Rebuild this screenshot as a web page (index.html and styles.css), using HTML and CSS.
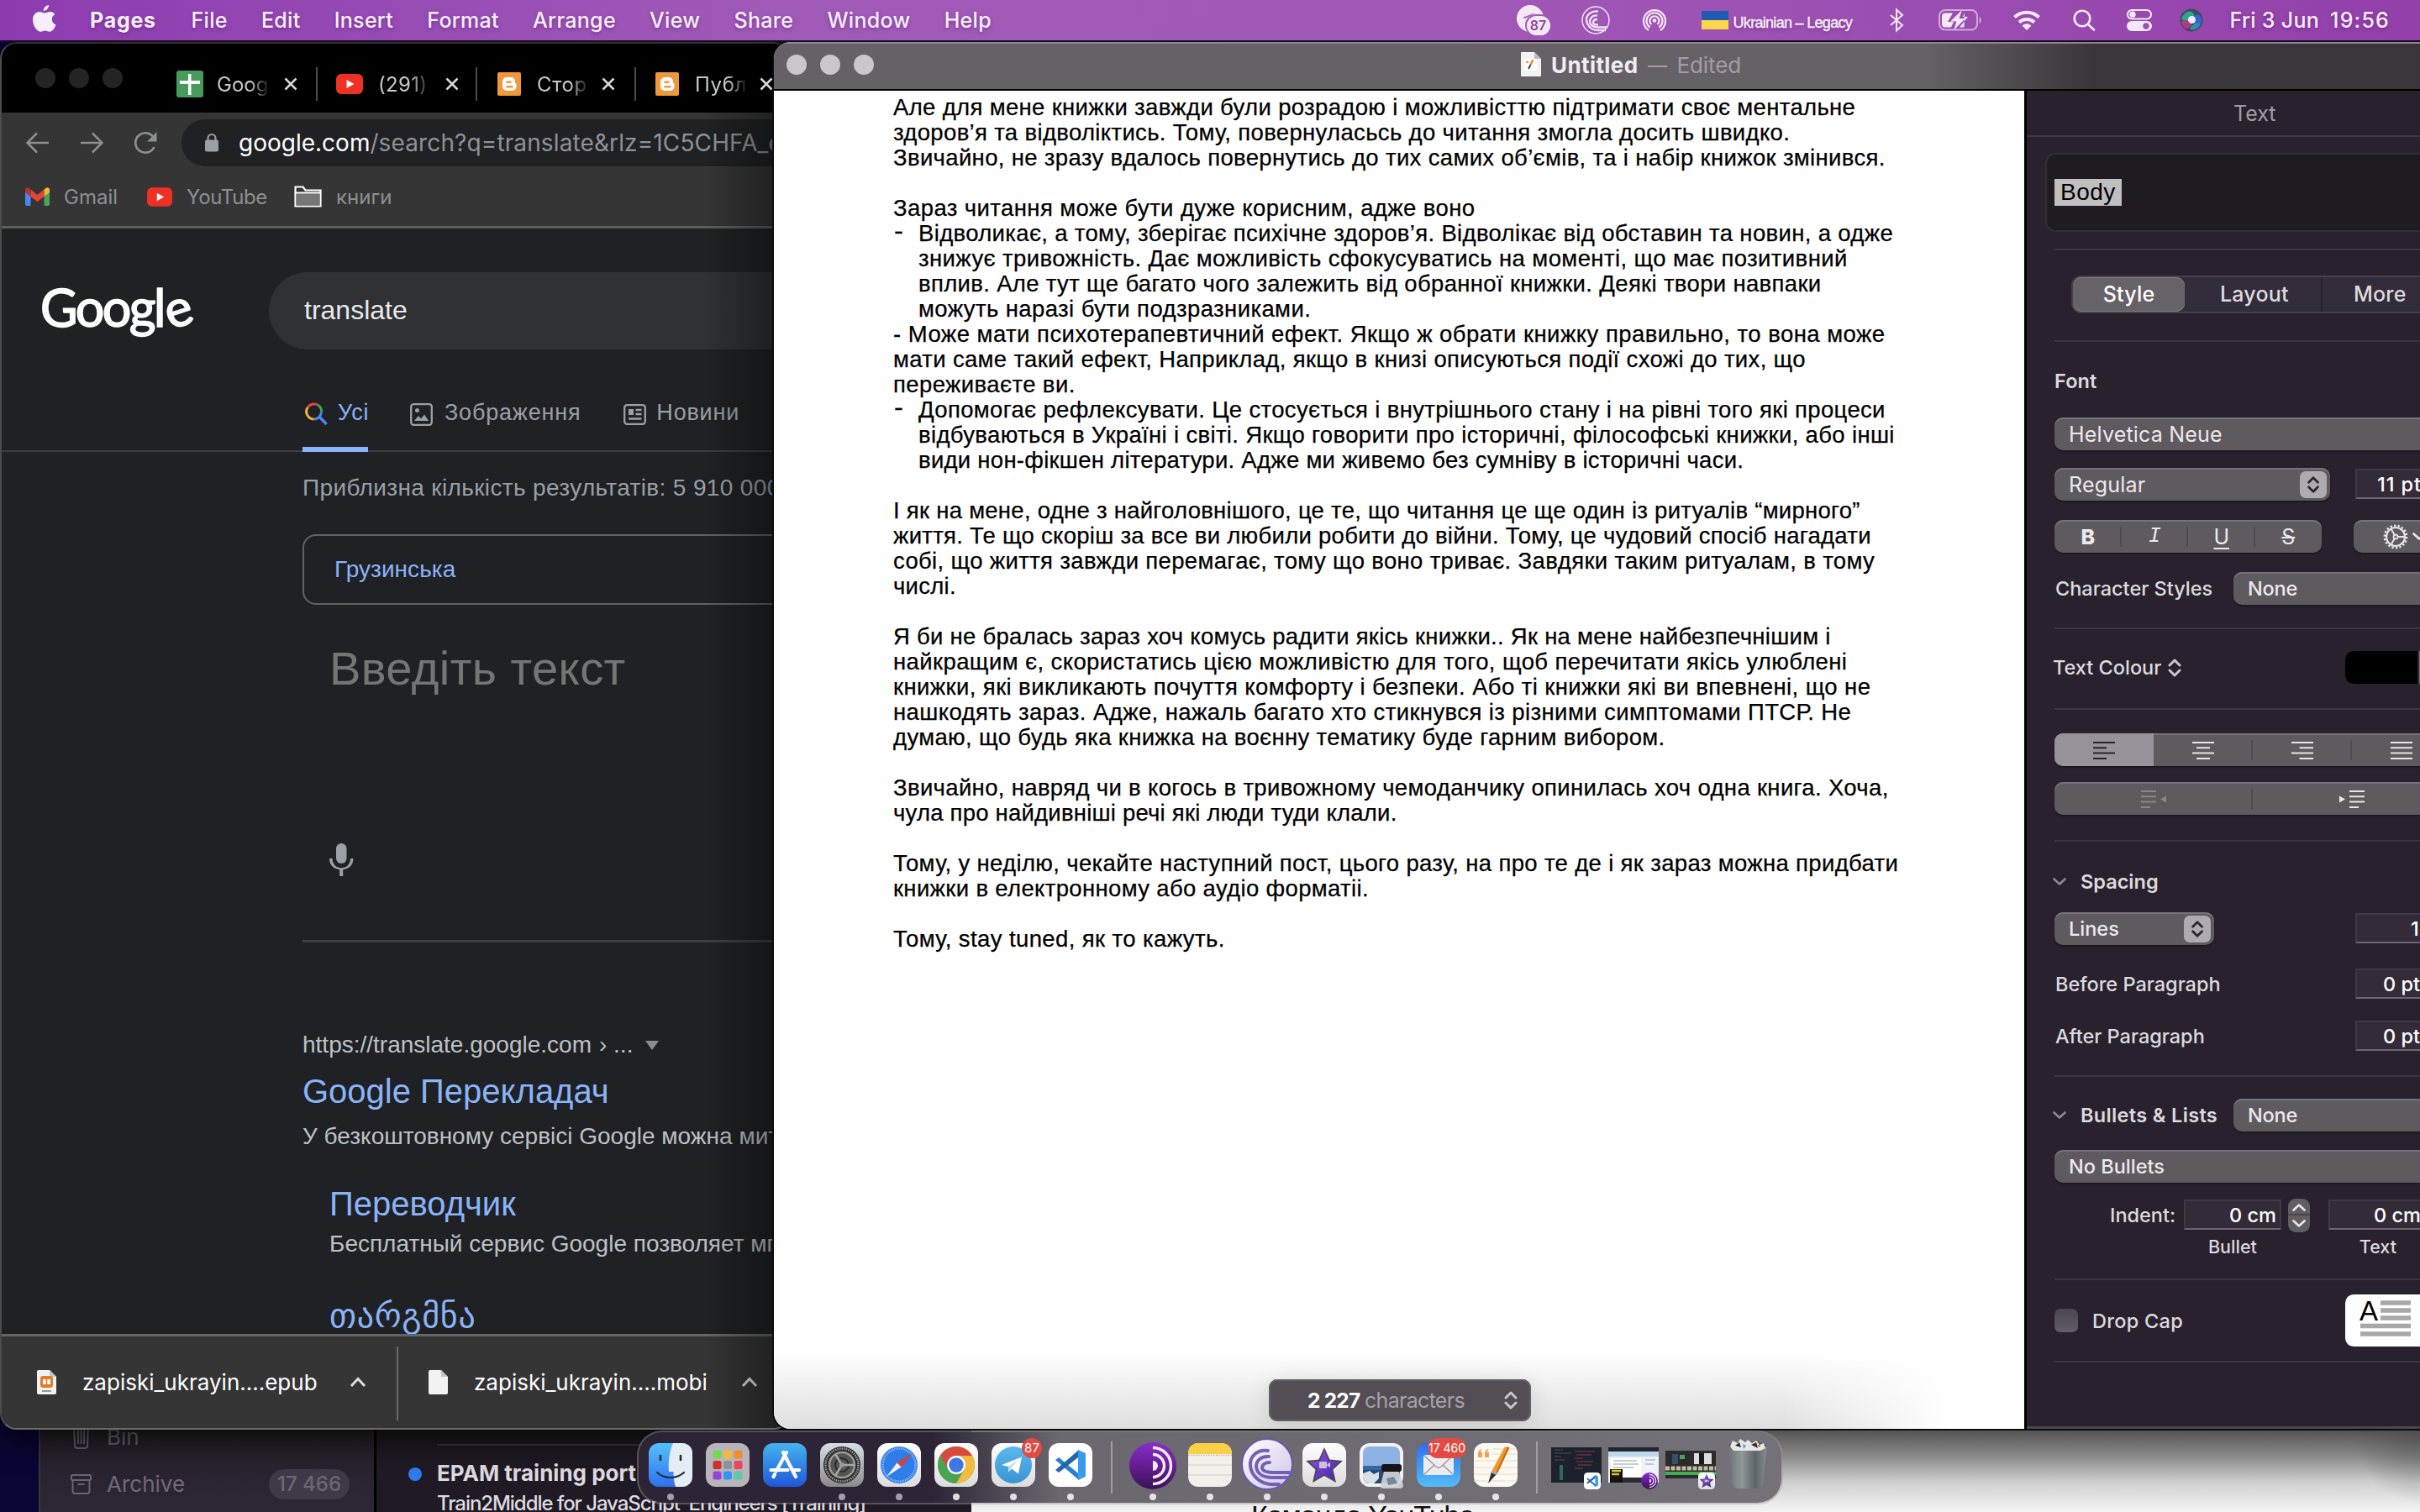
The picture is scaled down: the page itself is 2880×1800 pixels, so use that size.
FILE: index.html
```html
<!DOCTYPE html>
<html lang="uk">
<head>
<meta charset="utf-8">
<title>Pages — Untitled</title>
<link rel="stylesheet" href="styles.css">
</head>
<body>
<svg class="defs" width="0" height="0">
  <defs>
    <linearGradient id="gBlue" x1="0" y1="0" x2="0" y2="1"><stop offset="0" stop-color="#45b4ef"/><stop offset="1" stop-color="#1f58d8"/></linearGradient>
    <linearGradient id="gFinder" x1="0" y1="0" x2="0" y2="1"><stop offset="0" stop-color="#55c2f8"/><stop offset="1" stop-color="#2f6ff0"/></linearGradient>
    <linearGradient id="gWhite" x1="0" y1="0" x2="0" y2="1"><stop offset="0" stop-color="#fff"/><stop offset="1" stop-color="#dcdcde"/></linearGradient>
    <linearGradient id="gSilver" x1="0" y1="0" x2="0" y2="1"><stop offset="0" stop-color="#d5dfe6"/><stop offset="1" stop-color="#8d8b8a"/></linearGradient>
    <linearGradient id="gTg" x1="0" y1="0" x2="0" y2="1"><stop offset="0" stop-color="#5cb8ee"/><stop offset="1" stop-color="#3a94d2"/></linearGradient>
    <linearGradient id="gMail" x1="0" y1="0" x2="0" y2="1"><stop offset="0" stop-color="#2b6ff0"/><stop offset="1" stop-color="#55bdf8"/></linearGradient>
    <linearGradient id="gTor" x1="0" y1="0" x2="0" y2="1"><stop offset="0" stop-color="#8a2ccb"/><stop offset="1" stop-color="#3c1158"/></linearGradient>
    <linearGradient id="gStar" x1="0" y1="0" x2="1" y2="1"><stop offset="0" stop-color="#9a4ff0"/><stop offset="1" stop-color="#4424b4"/></linearGradient>
    <linearGradient id="gBt" x1="0" y1="0" x2="1" y2="1"><stop offset="0" stop-color="#fff"/><stop offset="1" stop-color="#cfc4e8"/></linearGradient>
    <linearGradient id="gBin" x1="0" y1="0" x2="1" y2="0"><stop offset="0" stop-color="#6d7578"/><stop offset=".35" stop-color="#8f9799"/><stop offset=".7" stop-color="#5b6467"/><stop offset="1" stop-color="#899093"/></linearGradient>
    <radialGradient id="gSiri"><stop offset="0" stop-color="#fff"/><stop offset=".35" stop-color="#9cc8f0"/><stop offset=".7" stop-color="#3c6c8c"/><stop offset="1" stop-color="#5a3a78"/></radialGradient>
  </defs>
  <symbol id="vscode" viewBox="0 0 52 52">
    <rect width="52" height="52" rx="12" fill="#fff"/>
    <path d="M8 20l4-3 27 22-3 5z" fill="#2a7fd0"/>
    <path d="M8 32l4 3L39 14l-3-6z" fill="#2465ab"/>
    <path d="M35 8l9 4v28l-9 4z" fill="#3b9bea"/>
  </symbol>
  <symbol id="imovie" viewBox="0 0 52 52">
    <rect width="52" height="52" rx="12" fill="url(#gWhite)"/>
    <path d="M26 5l6.500 14.500L48 21 36.500 31.500 40 47 26 39 12 47l3.500-15.500L4 21l15.500-1.500z" fill="#4e4a58"/>
    <path d="M26 9l5 12.500 12.500 1L34 30.500 37 43l-11-6.500L15 43l3-12.500-9.500-8 12.500-1z" fill="url(#gStar)"/>
    <rect x="20" y="22" width="9" height="8" rx="1" fill="#c9c6d0"/><path d="M29.500 25l3.500-2v6l-3.500-2z" fill="#c9c6d0"/>
  </symbol>
  <symbol id="tor" viewBox="0 0 56 56">
    <circle cx="28" cy="28" r="28" fill="url(#gTor)"/>
    <path d="M28 22a6 6 0 0 1 0 12z" fill="#f3ecf8"/>
    <path d="M28 14.500a13.500 13.500 0 0 1 0 27M28 6.500a21.500 21.500 0 0 1 0 43" fill="none" stroke="#f3ecf8" stroke-width="3.400"/>
  </symbol>
  <symbol id="updown" viewBox="0 0 16 22"><path d="M2 8l6-6 6 6M2 14l6 6 6-6" fill="none" stroke="currentColor" stroke-width="3" stroke-linecap="round" stroke-linejoin="round"/></symbol>
  <symbol id="down" viewBox="0 0 16 9"><path d="M1.500 1.500L8 7.500l6.500-6" fill="none" stroke="currentColor" stroke-width="2.600" stroke-linecap="round" stroke-linejoin="round"/></symbol>
  <symbol id="up" viewBox="0 0 16 9"><path d="M1.500 7.500L8 1.500l6.500 6" fill="none" stroke="currentColor" stroke-width="2.600" stroke-linecap="round" stroke-linejoin="round"/></symbol>
  <symbol id="cross" viewBox="0 0 16 16"><path d="M1.500 1.500l13 13M14.500 1.500l-13 13" stroke="currentColor" stroke-width="2.600"/></symbol>
  <symbol id="ytube" viewBox="0 0 32 24"><rect width="32" height="24" rx="6" fill="#ee3124"/><path d="M12.500 7v10l9-5z" fill="#fff"/></symbol>
  <symbol id="blogger" viewBox="0 0 28 28"><rect width="28" height="28" rx="2" fill="#f0993b"/><path fill="#fff" fill-rule="evenodd" d="M11 6h5a5 5 0 0 1 5 5v1.500c0 .8 1.500.6 1.500 1.700V17a5 5 0 0 1-5 5H11a5 5 0 0 1-5-5v-6a5 5 0 0 1 5-5zm.5 4.500a1.300 1.300 0 0 0 0 2.600h4a1.300 1.300 0 0 0 0-2.600zm0 5.500a1.300 1.300 0 0 0 0 2.600h6a1.300 1.300 0 0 0 0-2.600z"/></symbol>
</svg>

<header class="menubar">
  <svg class="apple" width="28" height="32" viewBox="0 0 28 32"><path fill="currentColor" d="M19 0c.3 3.500-3 7-6.200 7C12.400 3.600 15.700.4 19 0zM26.300 11c-5.400 3.400-4.200 10.400 1.200 12.500-1.200 3.600-4 8.300-7.300 8.300-2 0-3-1.300-5.500-1.300s-3.700 1.300-5.500 1.300C5 31.800 0 24.500 0 17.800 0 11.500 4 8 8 8c2.600 0 4.500 1.600 6.200 1.600C15.800 9.600 18 8 21 8c2 0 4 1 5.300 3z"/></svg>
  <b class="app">Pages</b><span>File</span><span>Edit</span><span>Insert</span><span>Format</span><span>Arrange</span><span>View</span><span>Share</span><span>Window</span><span>Help</span>
  <div class="status">
    <div class="tg"><svg width="40" height="36" viewBox="0 0 40 36"><circle cx="16" cy="16" r="16" fill="#f3e9f6"/><path d="M7 15l15-6-4 3-8 4z" fill="#a159b7"/><rect x="10" y="11" width="31" height="26" rx="13" fill="#a159b7"/><rect x="12" y="13" width="28" height="23" rx="11.500" fill="#f3e9f6"/></svg><i>87</i></div>
    <svg class="m37" width="34" height="34" viewBox="0 0 34 34" fill="none" stroke="#f0e4f4" stroke-width="2"><circle cx="17" cy="17" r="16" stroke-width="1.500"/><path stroke-width="2.300" d="M20 6.500C11 6 6 11 6 16s4 13 13 13h10M19 11.500c-6-.5-9 3-9 7s4 7 9 7h12M19 16c-3 0-5 1.500-5 4s2.500 2.500 6 2.500"/></svg>
    <svg class="m39" width="28" height="28" viewBox="0 0 28 28" fill="none" stroke="#f3e9f6" stroke-width="2.200"><circle cx="14" cy="14.500" r="2.300" fill="#f3e9f6" stroke="none"/><path d="M10.500 19a5.500 5.500 0 1 1 7 0M8.500 22.500a9.500 9.500 0 1 1 11 0M7 26a13 13 0 1 1 14 0"/></svg>
    <svg class="m42" width="32" height="22" viewBox="0 0 32 22"><rect width="32" height="11" fill="#1e5bb5"/><rect y="11" width="32" height="11" fill="#fbd649"/></svg>
    <span class="kbd">Ukrainian – Legacy</span>
    <svg class="bt" width="17" height="28" viewBox="0 0 17 28" fill="none" stroke="#f3e9f6" stroke-width="2"><path d="M1 8l14 12-7 6.500v-25L15 8 1 20"/></svg>
    <svg class="bat" width="52" height="26" viewBox="0 0 52 26"><rect x="1" y="1" width="45" height="23.500" rx="7" fill="none" stroke="#cfaadb" stroke-width="2"/><path d="M48.500 9v8c3-1 3-7 0-8z" fill="#cfaadb"/><path d="M8 4.500h9l-6 10.500h7l-3 6.500H8a4 4 0 0 1-4-4v-9a4 4 0 0 1 4-4z" fill="#f3e9f6"/><path d="M28 1L14 14.500h7.500L18 25l14-14h-7.500z" fill="#f3e9f6"/><path d="M31 4.500L29 9h6L25 21.500h5.500z" fill="#f3e9f6"/></svg>
    <svg class="m36" width="34" height="24" viewBox="0 0 34 24" fill="none" stroke="#f3e9f6" stroke-width="4"><path d="M2.500 8.500a21 21 0 0 1 29 0M8 14.500a13 13 0 0 1 18 0"/><path d="M11.500 18.500a8 8 0 0 1 11 0L17 24z" fill="#f3e9f6" stroke="none"/></svg>
    <svg class="m38" width="28" height="26" viewBox="0 0 28 26" fill="none" stroke="#f3e9f6" stroke-width="2.600" stroke-linecap="round"><circle cx="11" cy="11" r="9.300"/><path d="M18 18l7 6.500"/></svg>
    <svg class="m36" width="30" height="26" viewBox="0 0 30 26"><rect x="1" y="1" width="28" height="10.500" rx="5.200" fill="none" stroke="#f3e9f6" stroke-width="2"/><circle cx="7" cy="6.200" r="3.700" fill="#f3e9f6"/><rect y="14" width="30" height="12" rx="6" fill="#f3e9f6"/><circle cx="23" cy="20" r="3.700" fill="#9c4fb2"/></svg>
    <svg class="m33" width="28" height="28" viewBox="0 0 28 28"><circle cx="14" cy="14" r="13.500" fill="#3b4a66"/><path d="M2 12C6 2 16 0 18 10 14 18 4 16 2 12z" fill="#2fa48c"/><path d="M14 14c2-9 11-8 12.500-1-1 9-8 10-12.500 1z" fill="#3a63c8"/><path d="M2 15c6-1 10-1 13 0 0 6-4 10-8 9-3-2-5-5-5-9z" fill="#b03a7c"/><path d="M12 25c1-5 8-9 13-7-2 6-8 9-13 7z" fill="#2d8fae"/><circle cx="14.500" cy="13.500" r="4.500" fill="#fff" opacity=".9"/></svg>
    <span class="date">Fri 3 Jun</span><span class="time">19:56</span>
  </div>
</header>

<section class="web-under"><p>Команда YouTube</p></section>

<section class="mail">
  <aside class="mail-side">
    <div class="mrow"><svg width="25" height="28" viewBox="0 0 25 28" fill="none" stroke="#6a6370" stroke-width="2"><path d="M4 0l1 24q0 3 3 3h9q3 0 3-3l1-24M9 3v19M12.500 3v19M16 3v19"/></svg><span>Bin</span></div>
    <div class="mrow arch"><svg width="25" height="24" viewBox="0 0 25 24" fill="none" stroke="#6a6370" stroke-width="2"><rect x="1" y="1" width="23" height="6" rx="1.500"/><path d="M2.500 7v13q0 3 3 3h14q3 0 3-3V7M8.500 12h8"/></svg><span>Archive</span><em>17 466</em></div>
  </aside>
  <div class="mail-list">
    <div class="mail-item"><b>EPAM training port</b><p>Train2Middle for JavaScript&nbsp; Engineers [Training]</p></div>
  </div>
</section>

<section class="chrome">
  <div class="tabs">
    <i class="light"></i><i class="light"></i><i class="light"></i>
    <div class="tab first"><svg width="32" height="32" viewBox="0 0 32 32"><rect width="32" height="32" rx="3" fill="#469a5c"/><path d="M14 4h3.500v8H28v4H17.500v13H14V16H4v-4h10z" fill="#fff"/></svg><span>Goog</span><svg class="x" width="16" height="16"><use href="#cross"/></svg></div>
    <div class="tab second"><svg width="32" height="24"><use href="#ytube"/></svg><span>(291)</span><svg class="x" width="16" height="16"><use href="#cross"/></svg></div>
    <div class="tab third"><svg width="28" height="28"><use href="#blogger"/></svg><span>Сторі</span><svg class="x" width="16" height="16"><use href="#cross"/></svg></div>
    <div class="tab fourth"><svg width="28" height="28"><use href="#blogger"/></svg><span>Публі</span><svg class="x" width="16" height="16"><use href="#cross"/></svg></div>
  </div>
  <div class="toolbar">
    <svg width="28" height="26" viewBox="0 0 28 26"><path d="M13 1.500L1.500 13 13 24.500M2 13h25" fill="none" stroke="currentColor" stroke-width="2.500"/></svg>
    <svg class="fwd" width="28" height="26" viewBox="0 0 28 26"><path d="M15 1.500L26.500 13 15 24.500M26 13H1" fill="none" stroke="currentColor" stroke-width="2.500"/></svg>
    <svg class="rel" width="28" height="28" viewBox="0 0 28 28"><path d="M24.500 19a11.700 11.700 0 1 1 0-10" fill="none" stroke="currentColor" stroke-width="2.700"/><path d="M27.500 1v11.500H16z" fill="currentColor"/></svg>
    <div class="omni"><svg width="16" height="22" viewBox="0 0 16 22"><rect y="7.500" width="16" height="14" rx="2" fill="#9aa0a6"/><path d="M3.500 8V5.500a4.500 4.500 0 0 1 9 0V8" fill="none" stroke="#9aa0a6" stroke-width="2.200"/></svg><span class="host">google.com</span><span class="path">/search?q=translate&amp;rlz=1C5CHFA_enUA</span></div>
  </div>
  <div class="bookmarks">
    <svg width="29" height="22" viewBox="0 0 29 22"><path d="M0 4l6.500 5v13H2a2 2 0 0 1-2-2z" fill="#4a86f0"/><path d="M29 4l-6.500 5v13H27a2 2 0 0 0 2-2z" fill="#4ba558"/><path d="M22.500 2.500l2-1.500C26.500-.5 29 .8 29 3.500V6l-6.500 5z" fill="#f4b932"/><path d="M6.500 2.500L14.500 9l8-6.500V11l-8 6-8-6z" fill="#e2453b"/><path d="M0 3.500C0 .8 2.500-.5 4.500 1l2 1.500V11L0 6z" fill="#b5342c"/></svg><span class="gm">Gmail</span>
    <svg width="30" height="23"><use href="#ytube"/></svg><span class="yt">YouTube</span>
    <svg width="33" height="26" viewBox="0 0 33 26"><path d="M1.500 24.500v-23h9l3 4h18v19z" fill="#353535" stroke="#fff" stroke-width="2.200"/><path d="M2.500 9.500h28v14h-28z" fill="#777"/><path d="M1.500 8.500h30" stroke="#fff" stroke-width="2"/></svg><span>книги</span>
  </div>
  <main class="serp">
    <div class="search-row"><div class="logo">Goog<span class="l">l</span><span class="e">e</span></div><div class="search-box">translate</div></div>
    <nav class="serp-tabs">
      <div class="st active"><svg width="28" height="28" viewBox="0 0 28 28" fill="none" stroke-width="3"><path d="M4.200 6A9 9 0 0 1 16 3" stroke="#e0483b"/><path d="M16 3a9 9 0 0 1 4.500 8.500" stroke="#48a056"/><path d="M20.500 11.500A9 9 0 0 1 11.500 20" stroke="#4f86ee"/><path d="M11.500 20A9 9 0 0 1 4.200 6" stroke="#f2b534"/><path d="M18 17l8.500 9" stroke="#4f86ee" stroke-width="3.500"/></svg><span>Усі</span></div>
      <div class="st img"><svg width="27" height="27" viewBox="0 0 27 27" fill="none" stroke="#9aa0a6" stroke-width="2.300"><rect x="1.200" y="1.200" width="24.600" height="24.600" rx="3"/><circle cx="8.500" cy="8.500" r="2.500" fill="#9aa0a6" stroke="none"/><path d="M5 21l5-6 3 3.500 4-5 5 7.500z" fill="#9aa0a6" stroke="none"/></svg><span>Зображення</span></div>
      <div class="st news"><svg width="27" height="25" viewBox="0 0 27 25" fill="none" stroke="#9aa0a6" stroke-width="2.300"><rect x="1.200" y="1.200" width="24.600" height="22.600" rx="3"/><path d="M6 6h6v7H6z" fill="#9aa0a6" stroke="none"/><path d="M14.500 7h7M14.500 12h7M6 17.500h15.500"/></svg><span>Новини</span></div>
    </nav>
    <div class="results">
      <p class="stats">Приблизна кількість результатів: 5 910 000 000</p>
      <div class="langbox">Грузинська</div>
      <p class="placeholder">Введіть текст</p>
      <svg class="mic" width="28" height="39" viewBox="0 0 28 39" fill="#9aa0a6"><rect x="8" width="12.500" height="24" rx="6.200"/><path d="M0 18h3.500c0 15 21.500 15 21.500 0h3.400c0 8-5 12.500-12.200 13.300V39h-4v-7.700C5 30.500 0 26 0 18z"/></svg>
      <hr>
      <p class="url">https://translate.google.com <span>› ...</span><i></i></p>
      <h3>Google Перекладач</h3>
      <p class="desc">У безкоштовному сервісі Google можна миттєво</p>
      <h3 class="sub">Переводчик</h3>
      <p class="desc sub2">Бесплатный сервис Google позволяет мгновенно</p>
      <h3 class="geo">თარგმნა</h3>
    </div>
  </main>
  <footer class="downloads">
    <svg width="23" height="29" viewBox="0 0 23 29"><path d="M0 2q0-2 2-2h13l8 8v19q0 2-2 2H2q-2 0-2-2z" fill="#f2f2f2"/><path d="M15 0l8 8h-8z" fill="#c4c4c4"/><rect x="4" y="7" width="15" height="14" rx="3" fill="#e57b2c"/><path d="M7 11h3.700v6H7zM12.300 11H16v6h-3.700z" fill="#fff"/><path d="M6 25h11" stroke="#999" stroke-width="2"/></svg>
    <span>zapiski_ukrayin....epub</span>
    <svg class="caret" width="20" height="13" viewBox="0 0 20 13"><path d="M2 11l8-8.500L18 11" fill="none" stroke="#ddd" stroke-width="3"/></svg>
    <svg class="doc2" width="23" height="29" viewBox="0 0 23 29"><path d="M0 2q0-2 2-2h13l8 8v19q0 2-2 2H2q-2 0-2-2z" fill="#f2f2f2"/><path d="M15 0l8 8h-8z" fill="#c4c4c4"/></svg>
    <span class="n2">zapiski_ukrayin....mobi</span>
    <svg class="caret" width="20" height="13" viewBox="0 0 20 13"><path d="M2 11l8-8.500L18 11" fill="none" stroke="#ddd" stroke-width="3"/></svg>
  </footer>
</section>

<section class="pages">
  <div class="titlebar">
    <i class="light"></i><i class="light"></i><i class="light"></i>
    <svg class="doc-ico" width="24" height="29" viewBox="0 0 24 29"><path d="M0 1q0-1 1-1h15l8 8v20q0 1-1 1H1q-1 0-1-1z" fill="#f4f3f4"/><path d="M16 0l8 8h-8z" fill="#bdbabf"/><rect x="4" y="8" width="15" height="14" rx="3" fill="#fff"/><path d="M14 10l-5 10" stroke="#3a3a3a" stroke-width="1.800"/><path d="M14.500 9l-3 6M6 12h3" stroke="#e8952f" stroke-width="2"/></svg>
    <b>Untitled</b><span class="dash">—</span><span>Edited</span>
  </div>
  <div class="split">
    <article class="doc">
      <div class="text">
        <p>Але для мене книжки завжди були розрадою і можливісттю підтримати своє ментальне</p>
        <p>здоров’я та відволіктись. Тому, повернуласьсь до читання змогла досить швидко.</p>
        <p>Звичайно, не зразу вдалось повернутись до тих самих об’ємів, та і набір книжок змінився.</p>
        <p class="gap loose">Зараз читання може бути дуже корисним, адже воно</p>
        <p class="li dashed">Відволикає, а тому, зберігає психічне здоров’я. Відволікає від обставин та новин, а одже</p>
        <p class="li loose">знижує тривожність. Дає можливість сфокусуватись на моменті, що має позитивний</p>
        <p class="li">вплив. Але тут ще багато чого залежить від обранної книжки. Деякі твори навпаки</p>
        <p class="li loose">можуть наразі бути подзразниками.</p>
        <p class="looser">- Може мати психотерапевтичний ефект. Якщо ж обрати книжку правильно, то вона може</p>
        <p>мати саме такий ефект, Наприклад, якщо в книзі описуються події схожі до тих, що</p>
        <p class="loose">переживаєте ви.</p>
        <p class="li dashed">Допомогає рефлексувати. Це стосується і внутрішнього стану і на рівні того які процеси</p>
        <p class="li">відбуваються в Україні і світі. Якщо говорити про історичні, філософські книжки, або інші</p>
        <p class="li tight">види нон-фікшен літератури. Адже ми живемо без сумніву в історичні часи.</p>
        <p class="gap tight">І як на мене, одне з найголовнішого, це те, що читання це ще один із ритуалів “мирного”</p>
        <p class="tight">життя. Те що скоріш за все ви любили робити до війни. Тому, це чудовий спосіб нагадати</p>
        <p>собі, що життя завжди перемагає, тому що воно триває. Завдяки таким ритуалам, в тому</p>
        <p class="tight">числі.</p>
        <p class="gap tight">Я би не бралась зараз хоч комусь радити якісь книжки.. Як на мене найбезпечнішим і</p>
        <p class="loose">найкращим є, скористатись цією можливістю для того, щоб перечитати якісь улюблені</p>
        <p class="loose">книжки, які викликають почуття комфорту і безпеки. Або ті книжки які ви впевнені, що не</p>
        <p class="loose">нашкодять зараз. Адже, нажаль багато хто стикнувся із різними симптомами ПТСР. Не</p>
        <p>думаю, що будь яка книжка на воєнну тематику буде гарним вибором.</p>
        <p class="gap">Звичайно, навряд чи в когось в тривожному чемоданчику опинилась хоч одна книга. Хоча,</p>
        <p class="tighter">чула про найдивніші речі які люди туди клали.</p>
        <p class="gap">Тому, у неділю, чекайте наступний пост, цього разу, на про те де і як зараз можна придбати</p>
        <p>книжки в електронному або аудіо форматіі.</p>
        <p class="gap loose">Тому, stay tuned, як то кажуть.</p>
      </div>
      <div class="counter"><b>2 227</b><span>characters</span><svg width="16" height="22"><use href="#updown"/></svg></div>
    </article>
    <aside class="inspector">
      <h2>Text</h2>
      <div class="stylebox"><span>Body</span></div>
      <hr>
      <div class="segments"><span class="on">Style</span><span class="s2">Layout</span><span class="s3">More</span></div>
      <hr>
      <div class="row font-h"><b>Font</b></div>
      <div class="row r-font"><div class="ctl big">Helvetica Neue</div></div>
      <div class="row r-reg"><div class="ctl big reg">Regular<span class="step"><svg width="16" height="20"><use href="#updown"/></svg></span></div><div class="field pt">11 pt</div></div>
      <div class="row r-bius"><div class="ctl bius"><b>B</b><i>I</i><u>U</u><s>S</s></div>
        <div class="ctl gear"><svg width="30" height="30" viewBox="0 0 30 30" fill="none" stroke="#e6e4e7"><circle cx="15" cy="15" r="11" stroke-width="2.200"/><circle cx="15" cy="15" r="13.200" stroke-width="2.400" stroke-dasharray="2.300 2.300"/><circle cx="15" cy="15" r="2.500" stroke-width="1.800"/><path d="M17.500 15H26M13.700 12.800L9.500 5.500M13.700 17.200L9.500 24.500" stroke-width="2"/></svg><svg width="16" height="9"><use href="#down"/></svg></div></div>
      <div class="row r-char"><span class="lbl">Character Styles</span><div class="ctl none">None</div></div>
      <hr>
      <div class="row r-colour"><span class="lbl">Text Colour</span><svg width="16" height="22"><use href="#updown"/></svg><div class="swatch"></div></div>
      <hr>
      <div class="row r-align"><div class="ctl align">
        <span class="sel"><svg width="26" height="22" viewBox="0 0 26 22"><path d="M0 2h26M0 8.300h16M0 14.600h26M0 20.900h16"/></svg></span>
        <span><svg width="26" height="22" viewBox="0 0 26 22"><path d="M0 2h26M5 8.300h16M0 14.600h26M5 20.900h16"/></svg></span>
        <span><svg width="26" height="22" viewBox="0 0 26 22"><path d="M0 2h26M9.500 8.300H26M0 14.600h26M9.500 20.900H26"/></svg></span>
        <span><svg width="26" height="22" viewBox="0 0 26 22"><path d="M0 2h26M0 8.300h26M0 14.600h26M0 20.900h26"/></svg></span></div></div>
      <div class="row r-indent"><div class="ctl align ind">
        <span class="dis"><svg width="30" height="22" viewBox="0 0 30 22"><path d="M0 2h18M0 8.300h18M0 14.600h18M0 20.900h11"/><path class="tri" d="M30 7.500v8l-7-4z"/></svg></span>
        <span><svg width="30" height="22" viewBox="0 0 30 22"><path d="M12 2h18M12 8.300h18M12 14.600h18M12 20.900h11"/><path class="tri" d="M0 7.500v8l7-4z"/></svg></span></div></div>
      <hr>
      <div class="row r-spacing"><svg width="16" height="9"><use href="#down"/></svg><b>Spacing</b></div>
      <div class="row r-lines"><div class="ctl lines">Lines<span class="step"><svg width="16" height="20"><use href="#updown"/></svg></span></div><div class="field one">1</div></div>
      <div class="row r-before"><span class="lbl">Before Paragraph</span><div class="field">0 pt</div></div>
      <div class="row r-after"><span class="lbl">After Paragraph</span><div class="field">0 pt</div></div>
      <hr>
      <div class="row r-bullets"><svg width="16" height="9"><use href="#down"/></svg><b>Bullets &amp; Lists</b><div class="ctl none">None</div></div>
      <div class="row r-nobul"><div class="ctl">No Bullets</div></div>
      <div class="row r-ind2"><span class="lbl">Indent:</span><div class="field cm">0 cm</div><div class="stepper"><svg width="16" height="9"><use href="#up"/></svg><svg width="16" height="9"><use href="#down"/></svg></div><div class="field cm2">0 cm</div></div>
      <div class="row r-cap"><span>Bullet</span><span>Text</span></div>
      <hr>
      <div class="row r-drop"><i class="check"></i><span class="lbl">Drop Cap</span><div class="dropimg"><span>A</span><svg width="60" height="46" viewBox="0 0 60 46" stroke="#a8a8a8" stroke-width="5.500"><path d="M24 4h36M24 13h36M24 22h36M0 31.500h60M0 41h60"/></svg></div></div>
      <hr>
    </aside>
  </div>
</section>

<nav class="dock">
  <div class="di run dim"><svg width="52" height="52" viewBox="0 0 52 52"><rect width="52" height="52" rx="12" fill="url(#gFinder)"/><path d="M29 0h11a12 12 0 0 1 12 12v28a12 12 0 0 1-12 12h-8c-2-6-2.500-11-2.500-18H24C23 20 25 9 29 0z" fill="#e4ecf4"/><path d="M14 15v5M38 15v5" stroke="#1c2d44" stroke-width="2.600" stroke-linecap="round"/><path d="M10 35c9 8 23 8 32 0" fill="none" stroke="#1c2d44" stroke-width="2.200" stroke-linecap="round"/></svg></div>
  <div class="di"><svg width="52" height="52" viewBox="0 0 52 52"><rect width="52" height="52" rx="12" fill="#b7b4bc"/><g><rect x="8.500" y="8.500" width="10" height="10" rx="2.500" fill="#74d951"/><rect x="21" y="8.500" width="10" height="10" rx="2.500" fill="#f4b83d"/><rect x="33.500" y="8.500" width="10" height="10" rx="2.500" fill="#ee8d2e"/><rect x="8.500" y="21" width="10" height="10" rx="2.500" fill="#d0312a"/><rect x="21" y="21" width="10" height="10" rx="2.500" fill="#8d9297"/><rect x="33.500" y="21" width="10" height="10" rx="2.500" fill="#ee4560"/><rect x="8.500" y="33.500" width="10" height="10" rx="2.500" fill="#9348d4"/><rect x="21" y="33.500" width="10" height="10" rx="2.500" fill="#2f96f2"/><rect x="33.500" y="33.500" width="10" height="10" rx="2.500" fill="#5cc9a8"/></g></svg></div>
  <div class="di"><svg width="52" height="52" viewBox="0 0 52 52"><rect width="52" height="52" rx="12" fill="url(#gBlue)"/><path d="M24 11l15 29M28 11L16 33M9.500 32h20M36 32h7M14 37l-1.500 3" stroke="#fff" stroke-width="4.200" stroke-linecap="round"/></svg></div>
  <div class="di run dim"><svg width="52" height="52" viewBox="0 0 52 52"><rect width="52" height="52" rx="12" fill="url(#gSilver)"/><circle cx="26" cy="26" r="22" fill="#2c2c2c"/><circle cx="26" cy="26" r="19.500" fill="none" stroke="#a9a9a9" stroke-width="2.500" stroke-dasharray="1.300 1.300"/><circle cx="26" cy="26" r="15" fill="#555" stroke="#9a9a9a" stroke-width="2.500"/><circle cx="26" cy="26" r="8" fill="none" stroke="#2c2c2c" stroke-width="2"/><path d="M26 26h15M26 26l-8-13M26 26l-8 13" stroke="#a8a8a8" stroke-width="2.500"/><circle cx="26" cy="26" r="3" fill="#999"/></svg></div>
  <div class="di run dim"><svg width="52" height="52" viewBox="0 0 52 52"><rect width="52" height="52" rx="12" fill="url(#gWhite)"/><circle cx="26" cy="26" r="22" fill="#2f7de8"/><circle cx="26" cy="26" r="19.500" fill="none" stroke="#a7d0f8" stroke-width="2.600" stroke-dasharray=".8 1.240"/><path d="M42 12L28.500 28.500 23.500 23.500z" fill="#e33d31"/><path d="M11 40l12.500-16.500 5 5z" fill="#f4f4f4"/></svg></div>
  <div class="di run"><svg width="52" height="52" viewBox="0 0 52 52"><rect width="52" height="52" rx="12" fill="url(#gWhite)"/><circle cx="26" cy="26" r="22" fill="#4aa350"/><path d="M26 26L6.950 15A22 22 0 0 1 45 15z" fill="#d84a3b"/><path d="M26 15h19.050A22 22 0 0 1 26 48l9.500-16.500z" fill="#f2bb3f"/><path d="M6.950 15L16.500 31.500 26 26V15z" fill="#d84a3b"/><path d="M6.950 15L16.500 31.500 26 37v11A22 22 0 0 1 6.950 15z" fill="#4aa350"/><circle cx="26" cy="26" r="11" fill="#fff"/><circle cx="26" cy="26" r="8.700" fill="#3e77e4"/></svg></div>
  <div class="di run"><svg width="52" height="52" viewBox="0 0 52 52"><rect width="52" height="52" rx="12" fill="url(#gWhite)"/><circle cx="26" cy="26" r="22" fill="url(#gTg)"/><path d="M12 26l24-9.500-4 20-8-6-4 4v-6.500z" fill="#fff"/><path d="M20 28l12-8.500-8.500 9.500-3 5z" fill="#b9d8ee"/></svg><em class="badge">87</em></div>
  <div class="di run"><svg width="52" height="52"><use href="#vscode"/></svg></div>
  <i class="sep"></i>
  <div class="di run onion"><svg width="56" height="56"><use href="#tor"/></svg></div>
  <div class="di run"><svg width="52" height="52" viewBox="0 0 52 52"><rect width="52" height="52" rx="12" fill="#f2f0ea"/><path d="M0 13A12 12 0 0 1 12 0h28a12 12 0 0 1 12 12v1z" fill="#fbcf46"/><path d="M0 14.500h52" stroke="#b8b4a8" stroke-width="1.500" stroke-dasharray="1.500 1.500"/><path d="M0 26h52M0 38h52" stroke="#d2d0ca" stroke-width="1.200"/></svg></div>
  <div class="di run bt62"><svg width="62" height="62" viewBox="0 0 62 62"><circle cx="31" cy="31" r="30" fill="url(#gBt)" stroke="#6b56ac" stroke-width="2"/><g fill="none" stroke="#7360b4" stroke-width="4" stroke-linecap="round"><path d="M32 15C19 13 10 22 11 33s11 21 24 22h10"/><path d="M33 22c-9-1-15 5-15 12 1 9 9 13 19 13h20"/><path d="M34 29c-6 0-9 3-9 7 1 4 6 5 13 5h20"/></g></svg></div>
  <div class="di run"><svg width="52" height="52"><use href="#imovie"/></svg></div>
  <div class="di run"><svg width="54" height="54" viewBox="0 0 54 54"><rect width="52" height="52" rx="12" fill="#f2f2f4"/><rect x="4" y="4" width="44" height="44" rx="8" fill="#8fb2e4"/><path d="M4 27h44v6H4z" fill="#3467a8"/><path d="M4 32h44v8a8 8 0 0 1-8 8H12a8 8 0 0 1-8-8z" fill="#2a4a70"/><path d="M4 36l8-3 5 4 6-3v8l-6 6h-5a8 8 0 0 1-8-7z" fill="#d9dfe6"/><rect x="26" y="25" width="24" height="9" rx="3" fill="#151517"/><path d="M29 34h18l5 16q0 4-4 4H28q-4 0-3-4z" fill="#cfd3d6" opacity=".92"/><path d="M32 42l9-2 4 8-11 2z" fill="#76879c"/></svg></div>
  <div class="di run"><svg width="52" height="52" viewBox="0 0 52 52"><rect width="52" height="52" rx="12" fill="url(#gMail)"/><rect x="8" y="14" width="36" height="24" rx="3" fill="#ececee"/><path d="M9 15l14 13q3 2.500 6 0l14-13M9 37l12-11M43 37L31 26" fill="none" stroke="#9a9aa0" stroke-width="1.400"/></svg><em class="badge long">17 460</em></div>
  <div class="di run"><svg width="52" height="52" viewBox="0 0 52 52"><rect width="52" height="52" rx="12" fill="#fbf9f5"/><path d="M0 21h52M0 29h52M0 37h52M0 45h52M22 7h28M22 13h28" stroke="#f3d9b0" stroke-width="1"/><path d="M5 14c0-5 2-7 5-7-2 1.500-2 3-2 4h2v6H5zM13 14c0-5 2-7 5-7-2 1.500-2 3-2 4h2v6h-5z" fill="#efa04b"/><path d="M36 5.500q3.500-2.500 6 0L27.500 37 21 34z" fill="#ef9a33"/><path d="M40 4.500q2 0 2.500 1L28 36l-2-1z" fill="#c8701c"/><path d="M21 34l6 3-10 11z" fill="#333"/><path d="M22 32l6 3-1.500 3-6-3z" fill="#aaa"/></svg></div>
  <i class="sep"></i>
  <div class="di thumb"><svg width="60" height="52" viewBox="0 0 60 52"><rect y="5" width="60" height="42" fill="#1d212c"/><path d="M4 8h10M4 12h20M4 16h8M4 20h12" stroke="#4a4f5c" stroke-width="1.200"/><path d="M28 10h24M30 14h18M28 18h10M30 22h20M32 26h16M28 30h10" stroke="#7c4350" stroke-width="1.200"/><path d="M12 26v18" stroke="#2f6a55" stroke-width="4"/></svg><svg class="mini" width="20" height="20"><use href="#vscode"/></svg></div>
  <div class="di thumb"><svg width="60" height="52" viewBox="0 0 60 52"><rect y="5" width="60" height="42" fill="#eef1f5"/><path d="M0 5h60v5H0z" fill="#23252e"/><path d="M0 10h60v6H0z" fill="#bcd8ea"/><path d="M3 18h36v22H3z" fill="#fff"/><path d="M6 21h28M6 25h30M6 29h24M44 20h12M44 25h10" stroke="#b4bcc8" stroke-width="1.500"/><path d="M2 31h15v16H2z" fill="#16140c"/><path d="M4 33h11M4 37h9" stroke="#d8c436" stroke-width="2.500"/><path d="M17 41h24v6H17z" fill="#2c2c34"/></svg><svg class="mini" width="20" height="20"><use href="#tor"/></svg></div>
  <div class="di thumb"><svg width="60" height="52" viewBox="0 0 60 52"><rect y="9" width="60" height="33" fill="#2a2b2b"/><path d="M34 12h21v13H34z" fill="#dcdcdc"/><path d="M40 12h6v13h-6z" fill="#1a1a1a"/><path d="M8 13h7v12H8z" fill="#35516c"/><path d="M17 14h6v5h-6z" fill="#4aa65c"/><path d="M0 30h60" stroke="#c7b99c" stroke-width="5" stroke-dasharray="5 1.500"/><path d="M0 34h60v4H0z" fill="#3fae58"/></svg><svg class="mini" width="20" height="20"><use href="#imovie"/></svg></div>
  <div class="di bin"><svg width="46" height="60" viewBox="0 0 46 60"><path d="M0 7h46l-5 46q-1 6-8 6H13q-7 0-8-6z" fill="url(#gBin)"/><ellipse cx="23" cy="8" rx="22.500" ry="4.500" fill="#54585b"/><path d="M2 9l3-7 6 3 3-5 6 4 3-3 5 4 5-3 4 5 5-2 2 6-6 3H6z" fill="#e9e7e4"/><path d="M8 8l5-4 2 6zM27 7l6-3 2 7z" fill="#2d2f33"/><path d="M17 6l4 2-3 4z" fill="#49a6c8"/><path d="M34 8l3-2 1 4z" fill="#cc6a32"/></svg></div>
</nav>
</body>
</html>
```
FILE: styles.css
```css
* { box-sizing: border-box; margin: 0; padding: 0; }
body { width: 2880px; height: 1800px; overflow: hidden; position: relative; background: #0a0535; font-family: Inter, "Liberation Sans", sans-serif; }
i, em { font-style: normal; }
svg { display: block; flex: none; overflow: visible; }
.defs { position: absolute; }

/* Menu bar */
.menubar { position: absolute; inset: 0 0 auto 0; z-index: 9; height: 48px; padding-left: 39px; display: flex; align-items: center; color: #f6eef8; font-size: 25px; font-weight: 500; letter-spacing: .3px; line-height: 46px; white-space: nowrap; background: linear-gradient(90deg, #8d3cb0, #a05ab8 32%, #a159b7 60%, #9a4db1 80%, #9340aa); box-shadow: 0 2px 0 #1a0a24; text-shadow: 0 2px 4px rgba(60,0,80,.35); }
.menubar > span { margin-left: 40.200px; }
.menubar .app { margin: 0 1.500px 0 40px; letter-spacing: .75px; font-weight: 700; }
.menubar .apple { margin-top: -4px; }
.status { flex: 1; display: flex; align-items: center; justify-content: flex-end; padding-right: 36px; }
.tg { position: relative; }
.tg i { position: absolute; left: 12px; top: 13px; width: 28px; text-align: center; font-size: 16px; line-height: 23px; font-weight: 600; color: #8f479f; letter-spacing: 0; text-shadow: none; }
.m37 { margin-left: 37px; } .m39 { margin-left: 39px; } .m42 { margin-left: 42px; }
.m36 { margin-left: 36px; } .m38 { margin-left: 38px; } .m33 { margin-left: 33px; }
.kbd { font: 400 18px "Liberation Sans", sans-serif; letter-spacing: -.7px; margin-left: 6px; width: 140px; padding-top: 6px; -webkit-text-stroke: .4px; }
.bt { margin-left: 46px; } .bat { margin-left: 41px; }
.date { margin-left: 32px; } .time { margin-left: 13px; letter-spacing: 1.2px; }

/* Page behind everything */
.web-under { position: absolute; left: 1156px; top: 1700px; width: 1724px; height: 100px; background: radial-gradient(80px 90px at 100% 0, rgba(70,70,70,.5), transparent), linear-gradient(#505050, #8c8c8c 35%, #d0d0d0 65%, #f4f4f4); }
.web-under p { margin: 86px 0 0 333px; font: 34px/36px "Liberation Sans", sans-serif; letter-spacing: -1.1px; color: #111; white-space: nowrap; }

/* Mail window */
.mail { position: absolute; left: 46px; top: 1690px; width: 1110px; height: 110px; display: flex; border-left: 2px solid #3a3342; background: #1f1a23; }
.mail-side { width: 400px; border-right: 3px solid #000; background: linear-gradient(#241f29, #2e2735); padding: 9px 0 0 36px; }
.mrow { display: flex; align-items: center; height: 24px; margin-bottom: 32px; color: #716a77; font-size: 26px; }
.mrow span { margin-left: 18px; line-height: 24px; }
.mrow em { margin: 0 29px 0 auto; width: 96px; height: 36px; border-radius: 18px; background: #403a48; color: #6d6674; font: 500 24px/36px Inter, sans-serif; text-align: center; }
.mail-list { flex: 1; padding: 29px 0 0 72px; }
.mail-item { position: relative; border-top: 2px solid #39343d; padding-top: 17px; white-space: nowrap; color: #dedbe0; }
.mail-item::before { content: ""; position: absolute; left: -34px; top: 26px; width: 16px; height: 16px; border-radius: 50%; background: #2f7cf0; }
.mail-item b { display: block; font-size: 26px; line-height: 32px; }
.mail-item p { font-size: 24px; line-height: 32px; font-weight: 500; letter-spacing: -1.06px; margin-top: 4px; }

/* Browser window */
.chrome { position: absolute; left: 0; top: 50px; width: 940px; height: 1652px; border-radius: 20px; overflow: hidden; background: #202124; box-shadow: 0 10px 40px rgba(0,0,0,.8); border: 2px solid #4b4c4e; border-bottom-color: #6a6a6a; border-top-color: #333; }
.chrome::after { content: ""; position: absolute; right: 0; top: 82px; bottom: 0; width: 100px; background: linear-gradient(90deg, transparent, rgba(0,0,0,.45)); }
.chrome .light { width: 24px; height: 24px; border-radius: 50%; background: #242424; margin-right: 16px; margin-top: -14px; }
.tabs { height: 82px; background: #000; display: flex; align-items: center; padding-left: 40px; padding-top: 14px; color: #c6c8ca; }
.tabs > * { flex: none; }
.tab { display: flex; align-items: center; height: 40px; border-right: 2px solid #4a4b4d; font-size: 24px; letter-spacing: .6px; }
.tab span { width: 60px; overflow: hidden; white-space: nowrap; -webkit-mask-image: linear-gradient(90deg, #000 65%, transparent 105%); mask-image: linear-gradient(90deg, #000 65%, transparent 105%); }
.tab .x { margin-left: 20px; color: #d5d7d9; }
.first { margin-left: 48px; width: 168px; } .first span { margin-left: 16px; letter-spacing: 0; }
.second { padding-left: 22px; width: 190px; } .second span { margin-left: 18px; letter-spacing: .3px; }
.third { padding-left: 24px; width: 189px; } .third span { margin-left: 19px; } .third .x, .fourth .x { margin-left: 17px; }
.fourth { padding-left: 23px; width: 189px; } .fourth span { margin-left: 19px; }
.toolbar { height: 72px; background: #353535; display: flex; align-items: center; padding-left: 29px; color: #8d8f91; }
.fwd { margin-left: 36px; } .rel { margin-left: 36px; }
.omni { margin-left: 29px; flex: 1; height: 56px; border-radius: 28px 0 0 28px; background: #202124; display: flex; align-items: center; padding-left: 28px; font-size: 28px; white-space: nowrap; overflow: hidden; color: #8f9296; }
.omni .host { margin-left: 24px; color: #fff; }
.omni .path { letter-spacing: .12px; }
.bookmarks { height: 66px; background: #353535; border-bottom: 3px solid #5c5d5e; display: flex; align-items: center; padding: 0 0 7px 28px; font-size: 24px; color: #8d8f91; }
.bookmarks span { margin-left: 17px; }
.bookmarks .gm { margin-right: 35px; }
.bookmarks .yt { margin-right: 32px; letter-spacing: -.35px; }
.serp { height: 1316px; overflow: hidden; font-family: "Liberation Sans", sans-serif; white-space: nowrap; padding-top: 52px; }
.search-row { display: flex; height: 92px; align-items: center; }
.logo { width: 318px; padding-left: 46px; font: 400 61px/92px Lato, sans-serif; letter-spacing: -2.500px; color: #fff; -webkit-text-stroke: 1.6px #fff; margin-top: -8px; }
.logo span { display: inline-block; } .logo .e { transform: rotate(-18deg); }
.search-box { flex: 1; height: 92px; border-radius: 46px 0 0 46px; background: #303134; color: #e8eaed; font-size: 32px; line-height: 91px; padding-left: 42px; }
.serp-tabs { margin-top: 28px; height: 94px; border-bottom: 2px solid #3c4043; display: flex; padding-left: 358px; font-size: 27px; letter-spacing: .8px; color: #9aa0a6; }
.st { display: flex; align-items: center; height: 94px; }
.st svg { margin-top: 4px; } .st span { margin-top: 1px; }
.active { width: 78px; border-bottom: 6px solid #8ab4f8; padding: 6px 0 0 2px; color: #8ab4f8; } .active span { margin-left: 12px; }
.img { margin-left: 50px; } .img span { margin-left: 14px; }
.news { margin-left: 51px; } .news span { margin-left: 12px; }
.results { padding-left: 358px; }
.stats { font-size: 28px; line-height: 85px; color: #9aa0a6; letter-spacing: .36px; }
.langbox { margin-top: 13px; height: 84px; border: 2px solid #5f6368; border-right: 0; border-radius: 16px 0 0 16px; padding-left: 36px; font-size: 28px; line-height: 80px; color: #8ab4f8; letter-spacing: .05px; }
.placeholder { font-size: 56px; line-height: 151px; padding-left: 32px; color: #757575; letter-spacing: .45px; }
.mic { margin: 133px 0 0 32px; }
.results hr { border: 0; height: 3px; background: #3c4043; margin: 76px 0 102px; }
.url { font-size: 28px; line-height: 40px; color: #bdc1c6; display: flex; align-items: center; }
.url span { margin-left: 9px; } .url i { margin-left: 15px; border: 8px solid transparent; border-top: 11px solid #8a8c8f; border-bottom: 0; }
.results h3 { font-size: 40px; line-height: 50px; font-weight: 400; color: #8ab4f8; margin-top: 10px; }
.desc { font-size: 28px; line-height: 40px; margin-top: 9px; color: #bdc1c6; }
.results .sub { margin: 35px 0 0 32px; }
.sub2 { margin: 3px 0 0 32px; }
.results .geo { margin: 40px 0 0 32px; font-family: "DejaVu Sans", sans-serif; letter-spacing: .7px; }
.downloads { height: 112px; border-top: 3px solid #646566; background: linear-gradient(#6a6a6a, #6a6a6a) no-repeat 470px 12px / 2px 88px, #353535; display: flex; align-items: center; padding-left: 42px; font-size: 26px; color: #fff; }
.downloads > span { margin-left: 31px; width: 280px; white-space: nowrap; }
.downloads .caret { margin-left: 38px; }
.downloads .doc2 { margin-left: 74px; }
.downloads .n2 { margin-left: 31px; }

/* Word processor window */
.pages { position: absolute; left: 921px; top: 50px; width: 1999px; height: 1651px; border-radius: 20px; overflow: hidden; display: flex; flex-direction: column; background: #fff; box-shadow: 0 0 0 2px #0c0c0c; }
.titlebar { height: 58px; display: flex; align-items: center; padding: 0 0 4px 15px; background: linear-gradient(90deg, #666167 1370px, #3a353b 1570px); border-bottom: 2px solid #000; border-top: 2px solid #8c888d; font-size: 26px; color: #a29da3; }
.titlebar .light { width: 24px; height: 24px; border-radius: 50%; background: #cbc6cc; margin-right: 16px; }
.doc-ico { margin: -1px 12px 0 754px; }
.titlebar b { color: #f0edf1; letter-spacing: .4px; } .titlebar .dash { margin: 0 12px 0 11px; width: 23px; overflow: hidden; }
.titlebar span { letter-spacing: -.1px; }
.split { flex: 1; display: flex; min-height: 0; }
.doc { width: 1488px; flex: none; position: relative; background: linear-gradient(90deg, transparent 1200px, #fff 1400px), linear-gradient(#fff 1500px, #dedede 1593px); padding: 5px 0 0 142px; }
.text { font: 27.500px/30px "Liberation Sans", sans-serif; color: #000; letter-spacing: .34px; white-space: nowrap; -webkit-text-stroke: .25px #000; }
.text .gap { margin-top: 30px; } .text .tight { letter-spacing: .27px; } .text .loose { letter-spacing: .40px; } .text .looser { letter-spacing: .46px; } .text .tighter { letter-spacing: .22px; }
.li { padding-left: 30px; position: relative; }
.dashed::before { content: "-"; position: absolute; left: 2px; top: -3px; transform: scaleX(1.2); }
.counter { position: absolute; left: 589px; bottom: 9px; width: 312px; height: 50px; border-radius: 10px; background: #534e55; box-shadow: 0 0 0 2px #665f68 inset, 0 4px 30px rgba(0,0,0,.12); display: flex; align-items: center; padding-left: 46px; font-size: 25px; color: #a5a0a6; }
.counter b { color: #fff; font-size: 24.500px; letter-spacing: -.8px; margin-right: 8px; width: 60px; white-space: nowrap; } .counter span { letter-spacing: -.7px; } .counter svg { margin: 0 16px 0 auto; color: #c9c5ca; }

/* Inspector */
.inspector { flex: 1; border-left: 3px solid #000; background: #29222e; padding-left: 33px; color: #dddadf; font-size: 23.500px; font-weight: 500; white-space: nowrap; box-shadow: inset 0 -3px 0 #4d4652; }
.inspector b { font-weight: 600; }
.inspector hr { border: 0; height: 2px; background: #3d3642; }
.inspector h2 { margin-left: -33px; height: 55px; border-bottom: 2px solid #3d3742; padding-left: 246px; font-size: 25px; font-weight: 400; line-height: 54px; color: #a29da4; }
.stylebox { margin: 19px 0 20px -11px; height: 94px; border: 2px solid #332d37; border-radius: 12px; background: #201b20; padding: 29px 0 0 9px; }
.stylebox span { display: block; width: 80px; height: 32px; background: #bfbfbf; color: #000; font: 28px/32px "Liberation Sans", sans-serif; padding-left: 7px; letter-spacing: .5px; }
.segments { display: flex; margin: 30px 0 32px 20px; height: 45px; border: 2px solid #463f4c; border-right: 0; border-radius: 12px 0 0 12px; background: #332c3a; font-size: 25px; letter-spacing: .2px; line-height: 41px; }
.segments .on { width: 133px; border-radius: 10px; background: #676268; box-shadow: 0 -1px 0 #858086 inset, 0 1px 0 #858086 inset; text-align: center; color: #fff; }
.s2 { width: 164px; padding-left: 42px; border-right: 2px solid #27202c; } .s3 { padding-left: 37px; }
.row { display: flex; align-items: center; height: 39px; position: relative; }
.ctl { height: 39px; border-radius: 10px; background: #5f5a60; box-shadow: inset 0 2px 0 #77727a, 0 2px 2px rgba(0,0,0,.3); flex: none; display: flex; align-items: center; padding-left: 17px; color: #ebe9ec; width: 500px; }
.big { font-size: 25px; font-weight: 400; letter-spacing: .2px; }
.font-h { height: 36px; margin-top: 28px; } .font-h b { letter-spacing: .1px; }
.r-font { margin-top: 26px; }
.r-reg { margin-top: 21px; } .reg { width: 328px; }
.step { margin: 0 4px 0 auto; width: 32px; height: 32px; border-radius: 7px; background: #aeaaaf; color: #2b2530; display: flex; align-items: center; justify-content: center; }
.field { position: absolute; left: 358px; top: 1px; width: 200px; height: 36px; background: #332c38; border: 2px solid #403945; border-bottom-color: #6c6671; color: #fff; line-height: 34px; padding-left: 31px; }
.pt { padding-left: 24px; letter-spacing: .9px; }
.r-bius { margin-top: 23px; } .bius { width: 318px; padding: 0; font-size: 25px; }
.bius > * { flex: 1; text-align: center; background: linear-gradient(#504b52, #504b52) no-repeat 100% 50% / 2px 24px; font-weight: 500; } .bius > :last-child { background: none; } .bius b { font-weight: 800; }
.bius i { font-family: "Liberation Mono", monospace; font-style: italic; } .bius u, .bius s { text-decoration-thickness: 2px; font-weight: 400; } .bius u { text-underline-offset: 4px; }
.gear { margin-left: 38px; padding-left: 35px; width: 160px; gap: 5px; }
.r-char { margin-top: 23px; } .none { position: absolute; left: 213px; letter-spacing: -.2px; }
.r-char + hr { margin-top: 27px; }
.r-colour { margin-top: 26px; margin-left: -3px; } .r-colour svg { margin-left: 8px; color: #c8c5ca; } .r-colour + hr { margin-top: 29px; }
.swatch { position: absolute; left: 349px; width: 140px; height: 39px; border-radius: 10px; background: linear-gradient(90deg, #000 86px, #2a2a2a 86px, #2a2a2a 88px, #77727a 88px); }
.r-align { margin-top: 28px; } .align { padding: 0; overflow: hidden; stroke: #e8e6e9; stroke-width: 2px; width: 472px; }
.align span { flex: 1; height: 39px; display: flex; align-items: center; justify-content: center; background: linear-gradient(#504b52, #504b52) no-repeat 100% 50% / 2px 24px; } .align span:last-child { background: none; }
.align .sel { background: #979299; stroke: #29222e; } .tri { fill: #e8e6e9; stroke: none; } .dis { stroke: #8b868c; } .dis .tri { fill: #8b868c; }
.r-indent { margin-top: 19px; } .r-indent + hr { margin-top: 30px; }
.r-spacing { margin-top: 28px; margin-left: -2px; } .r-spacing svg, .r-bullets > svg { color: #8d8890; margin-right: 17px; }
.r-lines { margin-top: 17px; } .lines { width: 190px; } .one { padding-left: 64px; }
.r-before { margin-top: 27px; } .r-after { margin-top: 23px; } .r-after + hr { margin-top: 27px; }
.lbl { margin-left: 1px; }
.r-bullets { margin: 26px 0 0 -2px; } .r-bullets b { letter-spacing: .35px; } .r-bullets .none { left: 215px; }
.r-nobul { margin-top: 22px; }
.r-ind2 { margin-top: 19px; } .r-ind2 .lbl { margin-left: 66px; }
.cm { left: 154px; width: 116px; padding-left: 52px; } .cm2 { left: 326px; padding-left: 52px; }
.stepper { position: absolute; left: 278px; top: 0; width: 26px; height: 40px; border-radius: 9px; background: linear-gradient(#625d63 18px, #4a454c 18px, #4a454c 20px, #625d63 20px); padding: 6px 5px; display: flex; flex-direction: column; justify-content: space-between; color: #e8e6e9; }
.r-cap { height: 30px; font-size: 21.500px; margin-top: 3px; } .r-cap span { position: relative; left: 183px; } .r-cap span + span { left: 305px; }
.r-cap + hr { margin-top: 23px; }
.r-drop { height: 62px; margin-top: 17px; } .check { width: 28px; height: 28px; border-radius: 7px; background: linear-gradient(#4b4551, #625d66); } .r-drop .lbl { margin-left: 17px; letter-spacing: .3px; }
.dropimg { position: absolute; left: 346px; width: 130px; height: 62px; border-radius: 10px; background: #fff; padding: 6px 0 0 18px; color: #000; } .dropimg span { position: absolute; left: 17px; top: 4px; font: 33px/32px "Liberation Sans", sans-serif; }
.r-drop + hr { margin-top: 17px; }

/* Dock */
.dock { position: absolute; z-index: 8; left: 758px; top: 1703px; width: 1364px; height: 88px; border-radius: 30px; border: 2px solid rgba(160,155,165,.45); background: linear-gradient(90deg, #2d2536 350px, #6b676e 500px, #757178) padding-box; padding: 13px 0 0 12px; display: flex; gap: 16px; }
.di { position: relative; width: 52px; height: 52px; flex: none; }
.run::after { content: ""; position: absolute; left: 22px; top: 60px; width: 8px; height: 8px; border-radius: 50%; background: #f3f0f5; opacity: .9; }
.dim::after { background: #b3aab9; }
.sep { width: 2px; height: 62px; margin: -2px 4px 0 6px; background: #a19da4; flex: none; }
.onion { width: 56px; } .onion svg { margin-top: -1px; } .onion::after { left: 24px; }
.onion + .di { margin-left: -2px; }
.bt62 svg { margin: -6px 0 0 -5px; }
.badge { position: absolute; right: -8px; top: -6px; width: 24px; height: 24px; border-radius: 12px; background: #e24b41; color: #fff; font: 15px/24px Inter, sans-serif; text-align: center; white-space: nowrap; }
.long { width: 46px; right: -7px; font-size: 14px; }
.thumb { width: 60px; margin-right: -8px; } .mini { position: absolute; right: 1px; bottom: -3px; }
.sep + .thumb { margin-left: -4px; }
.bin svg { margin: -5px 0 0 7px; }
```
